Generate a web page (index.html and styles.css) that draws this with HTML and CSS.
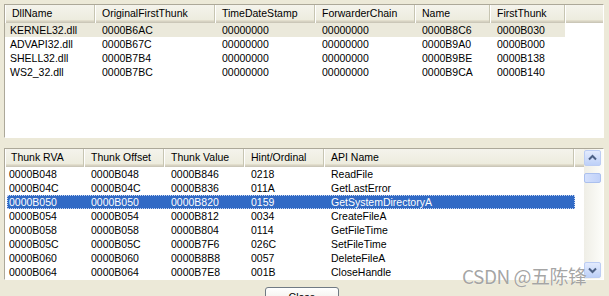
FILE: index.html
```html
<!DOCTYPE html>
<html lang="en">

	<head>
		<meta charset="UTF-8">
		<title>Import Table</title>
		<link rel="stylesheet" href="styles.css">
	</head>

	<body>
		<div class="window">
			<div class="list list-dll">
				<div class="head">
					<div class="hcell">DllName</div>
					<div class="hcell">OriginalFirstThunk</div>
					<div class="hcell">TimeDateStamp</div>
					<div class="hcell">ForwarderChain</div>
					<div class="hcell">Name</div>
					<div class="hcell">FirstThunk</div>
					<div class="hcell fill"></div>
				</div>
				<div class="row inactive">
					<span>KERNEL32.dll</span><span>0000B6AC</span><span>00000000</span><span>00000000</span><span>0000B8C6</span><span>0000B030</span>
				</div>
				<div class="row">
					<span>ADVAPI32.dll</span><span>0000B67C</span><span>00000000</span><span>00000000</span><span>0000B9A0</span><span>0000B000</span>
				</div>
				<div class="row">
					<span>SHELL32.dll</span><span>0000B7B4</span><span>00000000</span><span>00000000</span><span>0000B9BE</span><span>0000B138</span>
				</div>
				<div class="row">
					<span>WS2_32.dll</span><span>0000B7BC</span><span>00000000</span><span>00000000</span><span>0000B9CA</span><span>0000B140</span>
				</div>
			</div>

			<div class="list list-thunk">
				<div class="main">
					<div class="head">
						<div class="hcell">Thunk RVA</div>
						<div class="hcell">Thunk Offset</div>
						<div class="hcell">Thunk Value</div>
						<div class="hcell">Hint/Ordinal</div>
						<div class="hcell">API Name</div>
						<div class="hcell fill"></div>
					</div>
					<div class="row"><span>0000B048</span><span>0000B048</span><span>0000B846</span><span>0218</span><span>ReadFile</span></div>
					<div class="row"><span>0000B04C</span><span>0000B04C</span><span>0000B836</span><span>011A</span><span>GetLastError</span></div>
					<div class="row selected"><span>0000B050</span><span>0000B050</span><span>0000B820</span><span>0159</span><span>GetSystemDirectoryA</span></div>
					<div class="row"><span>0000B054</span><span>0000B054</span><span>0000B812</span><span>0034</span><span>CreateFileA</span></div>
					<div class="row"><span>0000B058</span><span>0000B058</span><span>0000B804</span><span>0114</span><span>GetFileTime</span></div>
					<div class="row"><span>0000B05C</span><span>0000B05C</span><span>0000B7F6</span><span>026C</span><span>SetFileTime</span></div>
					<div class="row"><span>0000B060</span><span>0000B060</span><span>0000B8B8</span><span>0057</span><span>DeleteFileA</span></div>
					<div class="row"><span>0000B064</span><span>0000B064</span><span>0000B7E8</span><span>001B</span><span>CloseHandle</span></div>
				</div>
				<div class="vscroll">
					<div class="sb-btn">
						<svg width="15" height="14" viewBox="0 0 15 14"><path d="M4 8.5 L7.5 5 L11 8.5" fill="none" stroke="#4d6185" stroke-width="2"/></svg>
					</div>
					<div class="sb-thumb"></div>
					<div class="sb-track"></div>
					<div class="sb-btn">
						<svg width="15" height="14" viewBox="0 0 15 14"><path d="M4 5.5 L7.5 9 L11 5.5" fill="none" stroke="#4d6185" stroke-width="2"/></svg>
					</div>
				</div>
			</div>

			<div class="actions">
				<button class="btn">Close</button>
			</div>

			<div class="watermark">CSDN @五陈锋</div>
		</div>
	</body>

</html>
```

FILE: styles.css
```css
* {
	margin: 0;
	padding: 0;
	box-sizing: border-box;
}

html,
body {
	overflow: hidden;
	background: #ece9d8;
}

body {
	font-family: "Liberation Sans", Arial, sans-serif;
	font-size: 10.5px;
	color: #000000;
}

.window {
	position: relative;
	width: 609px;
	height: 296px;
	overflow: hidden;
	padding: 4px 5px 0 4px;
}

.list {
	background: #ffffff;
	border: 1px solid;
	border-color: #aca899 #ffffff #ffffff #aca899;
}

.list-dll {
	height: 134px;
}

.list-thunk {
	height: 132px;
	margin-top: 10px;
	display: flex;
}

.list-thunk .main {
	flex: 1;
}

/* column header */
.head {
	display: grid;
	height: 18px;
	background: linear-gradient(#f4f3ec, #ebeadb);
	box-shadow: inset 0 -1px #cbc7b8, inset 0 -2px #d6d2c2, inset 0 -3px #e2decd;
}

.list-dll .head {
	grid-template-columns: 90px 120px 100px 100px 75px 75px 1fr;
}

.list-thunk .head {
	grid-template-columns: 79px 80px 80px 80px 250px 1fr;
}

.hcell {
	line-height: 17px;
	padding-left: 7px;
	white-space: nowrap;
	overflow: hidden;
	border-right: 1px solid #c7c5b2;
	box-shadow: inset 1px 0 #ffffff;
}

.list-thunk .hcell:first-child {
	padding-left: 6px;
}

.hcell.fill {
	border-right: none;
}

/* rows */
.row {
	display: grid;
	height: 14px;
	line-height: 14px;
	white-space: nowrap;
}

.row span {
	padding-left: 7px;
	overflow: hidden;
}

.list-dll .row {
	width: 560px;
	grid-template-columns: 90px 120px 100px 100px 75px 75px;
}

.list-dll .row span:first-child {
	padding-left: 5px;
}

.list-thunk .row {
	width: 568px;
	margin-left: 2px;
	grid-template-columns: 77px 80px 80px 80px 251px;
}

.list-thunk .row span:first-child {
	padding-left: 2px;
}

.row.inactive {
	background: #ebe9db;
}

.row.selected {
	background: #316ac5;
	color: #ffffff;
	outline: 1px dotted #c8d6f0;
	outline-offset: -1px;
}

/* scrollbar */
.vscroll {
	width: 19px;
	padding: 1px 2px 1px 0;
	display: flex;
	flex-direction: column;
	background: linear-gradient(to right, #efeee6, #fdfdfa);
}

.sb-btn {
	height: 16px;
	display: flex;
	align-items: center;
	justify-content: center;
	border: 1px solid #bccdf3;
	border-radius: 2px;
	background: linear-gradient(#e3ebfd, #bdd0f8);
}

.sb-thumb {
	height: 10px;
	margin-top: 7px;
	border: 1px solid #abc0ee;
	border-radius: 2px;
	background: linear-gradient(to right, #d4e0fc, #c0d1f9);
}

.sb-track {
	flex: 1;
}

/* buttons */
.actions {
	padding: 7px 0 0 261px;
}

.btn {
	width: 74px;
	height: 21px;
	padding-bottom: 2px;
	font-family: "Liberation Sans", Arial, sans-serif;
	font-size: 10.5px;
	color: #000000;
	border: 1px solid #707a84;
	border-radius: 3px;
	background: linear-gradient(#ffffff, #f3f2ec 60%, #e3e0d4);
}

.watermark {
	position: absolute;
	left: 462px;
	top: 265px;
	font-family: "Noto Sans CJK SC", sans-serif;
	font-size: 19px;
	line-height: 22px;
	letter-spacing: -0.5px;
	color: rgba(105, 105, 105, 0.6);
	text-shadow: 0 0 1px #ffffff;
	white-space: nowrap;
}
```
